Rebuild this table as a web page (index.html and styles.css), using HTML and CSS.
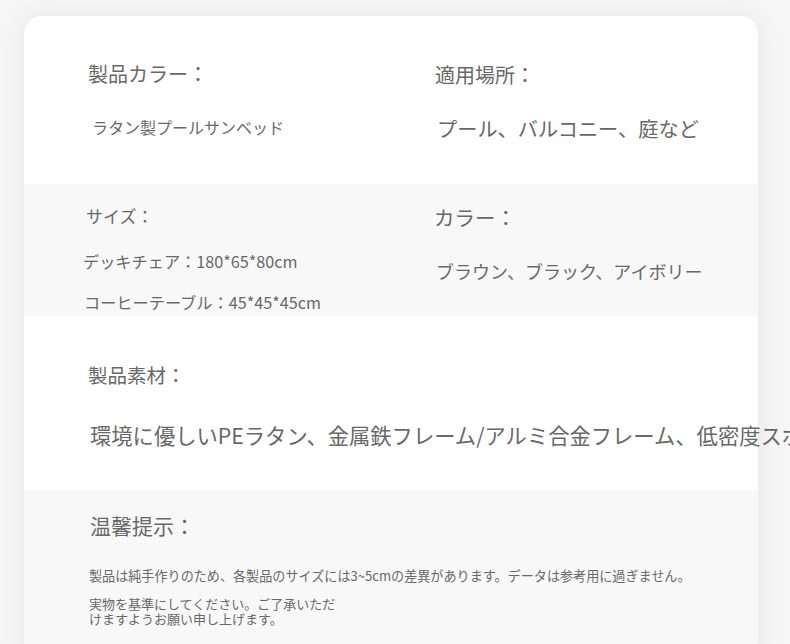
FILE: index.html
```html
<!DOCTYPE html>
<html lang="ja">
<head>
<meta charset="utf-8">
<link rel="stylesheet" href="styles.css">
</head>
<body>
<div class="card">
  <section class="band band-1">
    <div class="col col-left">
      <div class="title t1">製品カラー：</div>
      <div class="value v1">ラタン製プールサンベッド</div>
    </div>
    <div class="col col-right">
      <div class="title t2">適用場所：</div>
      <div class="value v2">プール、バルコニー、庭など</div>
    </div>
  </section>
  <section class="band band-2 gray">
    <div class="col col-left">
      <div class="title t3">サイズ：</div>
      <div class="value v3">デッキチェア：180*65*80cm</div>
      <div class="value v4">コーヒーテーブル：45*45*45cm</div>
    </div>
    <div class="col col-right">
      <div class="title t4">カラー：</div>
      <div class="value v5">ブラウン、ブラック、アイボリー</div>
    </div>
  </section>
  <section class="band band-3">
    <div class="col col-full">
      <div class="title t5">製品素材：</div>
      <div class="value v6">環境に優しいPEラタン、金属鉄フレーム/アルミ合金フレーム、低密度スポンジ</div>
    </div>
  </section>
  <section class="band band-4 gray">
    <div class="col col-full">
      <div class="title t6">温馨提示：</div>
      <div class="note n1">製品は純手作りのため、各製品のサイズには3~5cmの差異があります。データは参考用に過ぎません。</div>
      <div class="note n2">実物を基準にしてください。ご了承いただ<br>けますようお願い申し上げます。</div>
    </div>
  </section>
</div>
</body>
</html>
```
FILE: styles.css
```css
html, body {
  margin: 0;
  padding: 0;
  background: #f6f6f6;
  overflow: hidden;
  height: 644px;
}
body {
  font-family: "Noto Sans CJK JP", "Noto Sans", sans-serif;
  color: #686868;
  padding: 16px 32px 0 24px;
}
.card {
  width: 734px;
  background: #ffffff;
  border-radius: 18px;
  box-shadow: 0 0 28px rgba(0, 0, 0, 0.07);
  display: flex;
  flex-direction: column;
}
.band {
  display: flex;
}
.gray {
  background: #f8f8f8;
}
.band-1 { height: 168px; border-radius: 18px 18px 0 0; }
.band-2 { height: 132px; }
.band-3 { height: 174px; }
.band-4 { height: 180px; }

.col {
  display: flex;
  flex-direction: column;
}
.col-left { width: 346px; padding-left: 64px; }
.col-right { flex: 1; padding-left: 1px; }
.col-full { padding-left: 64px; }

.title, .value {
  white-space: nowrap;
  line-height: 30px;
}
.title { font-size: 20px; }

.t1 { margin-top: 43px; }
.v1 { margin-top: 23px; font-size: 16px; padding-left: 4px; }
.t2 { margin-top: 44px; }
.v2 { margin-top: 24px; font-size: 20.2px; padding-left: 2px; }

.t3 { margin-top: 17px; font-size: 17px; margin-left: -2px; }
.v3 { margin-top: 15px; font-size: 16.2px; margin-left: -5px; }
.v4 { margin-top: 11px; font-size: 16.2px; margin-left: -4px; }
.t4 { margin-top: 18px; margin-left: -1px; font-size: 20.5px; }
.v5 { margin-top: 24px; font-size: 18px; padding-left: 1px; }

.t5 { margin-top: 44px; font-size: 19.5px; }
.v6 { margin-top: 30px; font-size: 21.3px; padding-left: 2px; }

.t6 { margin-top: 20px; font-size: 21px; padding-left: 2px; }
.note {
  font-size: 13.1px;
  line-height: 15px;
  padding-left: 1px;
  white-space: nowrap;
}
.n1 { margin-top: 28px; }
.n2 { margin-top: 13px; font-size: 13px; }
```
